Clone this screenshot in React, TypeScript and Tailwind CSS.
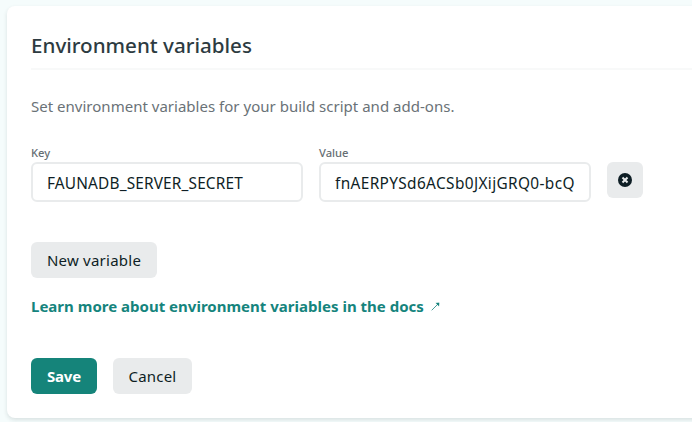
import type { ReactNode } from "react";

function Field({ label, children }: { label: string; children: ReactNode }) {
  return (
    <div className="w-[272px]">
      <div className="h-4 text-[11.2px] leading-[14px] font-medium text-[#666e73]"><span>{label}</span></div>
      <div className="flex h-10 items-center rounded-md border-2 border-[#e9ebec] px-[14px] pt-[3px] whitespace-nowrap">
        {children}
      </div>
    </div>
  );
}

export default function App() {
  return (
    <div className="h-[422px] w-[692px] overflow-hidden bg-[#f5fcfc] pt-[6px] pl-[7px] font-['Noto_Sans','Open_Sans',sans-serif] text-[15px] text-[#0e1e25]">
      <section className="h-[412px] w-[720px] rounded-lg bg-white px-6 pt-[25px] shadow-[0_2px_4px_rgba(14,30,37,0.12)]">
        <h2 className="h-[39px] border-b-2 border-[#f8f9f9] text-[20.6px] leading-[28px] font-medium text-[#2d3b41]"><span>Environment variables</span></h2>
        <p className="mt-6 leading-6 tracking-[0.015px] text-[#6a7277]"><span>Set environment variables for your build script and add-ons.</span></p>
        <div className="mt-[28px] flex gap-4">
          <Field label="Key"><span className="text-[15.4px] tracking-[0.16px] font-[450]">FAUNADB_SERVER_SECRET</span></Field>
          <Field label="Value"><span className="text-[15.4px] tracking-[0.36px] font-[450]">fnAERPYSd6ACSb0JXijGRQ0-bcQ</span></Field>
          <button aria-label="Remove variable" className="mt-4 flex h-9 w-9 items-center justify-center rounded-md bg-[#e9ebec]">
            <svg className="h-[14px] w-[14px]" viewBox="0 0 14 14">
              <circle cx="7" cy="7" r="7" fill="#0e1e25" />
              <path d="M5.2 5.2 8.8 8.8M8.8 5.2 5.2 8.8" stroke="#e9ebec" strokeWidth="2" strokeLinecap="square" />
            </svg>
          </button>
        </div>
        <button className="mt-10 flex h-9 w-[126px] items-center justify-center rounded-md bg-[#e9ebec] pt-px font-[450] tracking-[0.24px] whitespace-nowrap"><span>New variable</span></button>
        <a className="mt-4 flex h-6 items-center font-bold whitespace-nowrap text-[#15847d]">
          <span className="w-[393px] tracking-[0.01px]">Learn more about environment variables in the docs</span>
          <svg className="mt-px ml-[7px] h-[9px] w-[9px]" viewBox="0 0 9 9" fill="none" stroke="currentColor">
            <path d="M.7 8.3 7.6 1.4" strokeWidth=".8" />
            <path d="M4.8 1 8.2.8 8 4.2Z" fill="currentColor" strokeWidth=".2" />
          </svg>
        </a>
        <div className="mt-10 flex gap-4">
          <button className="flex h-9 w-[66px] items-center justify-center rounded-md bg-[#15847a] pt-px font-bold tracking-[-0.25px] text-white"><span>Save</span></button>
          <button className="flex h-9 w-[79px] items-center justify-center rounded-md bg-[#e9ebec] pt-px font-[450] tracking-[0.2px]"><span>Cancel</span></button>
        </div>
      </section>
    </div>
  );
}
